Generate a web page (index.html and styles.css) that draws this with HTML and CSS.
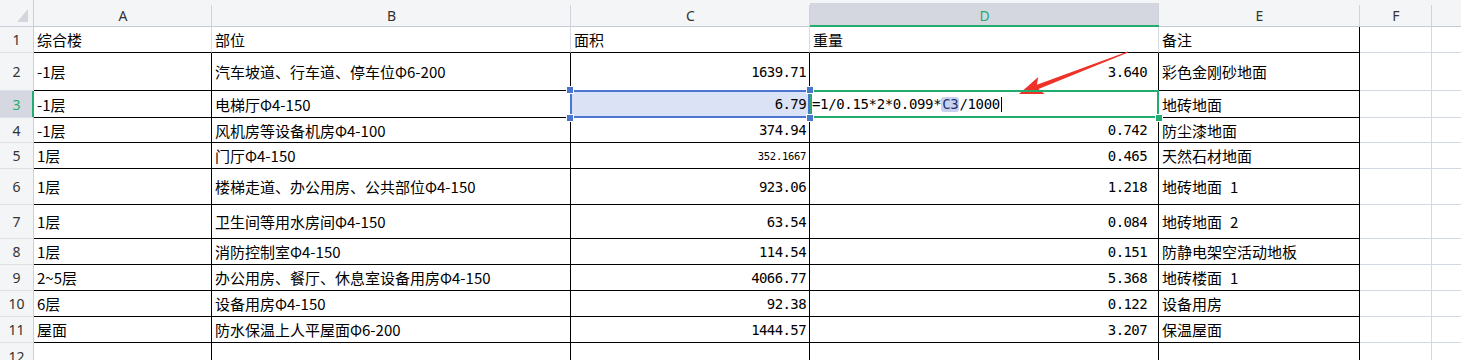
FILE: index.html
```html
<!DOCTYPE html>
<html lang="zh-CN">
<head>
<meta charset="utf-8">
<title>Sheet</title>
<link rel="stylesheet" href="styles.css">
</head>
<body>
<div class="sheet">
  <div class="grid">
    <div class="corner"><svg width="34" height="27" viewBox="0 0 34 27"><polygon points="17,22 28,22 28,9" fill="#d3d6dd"/></svg></div>
    <div class="ch">A</div>
    <div class="ch">B</div>
    <div class="ch">C</div>
    <div class="ch sel">D</div>
    <div class="ch">E</div>
    <div class="ch">F</div>
    <div class="ch"></div>

    <div class="rh">1</div>
    <div class="c r1">综合楼</div>
    <div class="c r1">部位</div>
    <div class="c r1">面积</div>
    <div class="c r1">重量</div>
    <div class="c r1 last">备注</div>
    <div class="g"></div><div class="g"></div>

    <div class="rh">2</div>
    <div class="c">-1层</div>
    <div class="c">汽车坡道、行车道、停车位Φ6-200</div>
    <div class="c n">1639.71</div>
    <div class="c n nd">3.640</div>
    <div class="c">彩色金刚砂地面</div>
    <div class="g"></div><div class="g"></div>

    <div class="rh sel">3</div>
    <div class="c">-1层</div>
    <div class="c">电梯厅Φ4-150</div>
    <div class="c n act-c">6.79<div class="sel-c"><span class="hd tl"></span><span class="hd tr"></span><span class="hd bl"></span><span class="hd br"></span></div></div>
    <div class="c fx act-d"><span>=1/0.15*2*0.099*</span><span class="ref">C3</span><span>/1000</span><span class="caret"></span><div class="sel-d"><span class="hd-g"></span></div></div>
    <div class="c">地砖地面</div>
    <div class="g"></div><div class="g"></div>

    <div class="rh">4</div>
    <div class="c">-1层</div>
    <div class="c">风机房等设备机房Φ4-100</div>
    <div class="c n">374.94</div>
    <div class="c n nd">0.742</div>
    <div class="c">防尘漆地面</div>
    <div class="g"></div><div class="g"></div>

    <div class="rh">5</div>
    <div class="c">1层</div>
    <div class="c">门厅Φ4-150</div>
    <div class="c n tiny">352.1667</div>
    <div class="c n nd">0.465</div>
    <div class="c">天然石材地面</div>
    <div class="g"></div><div class="g"></div>

    <div class="rh">6</div>
    <div class="c">1层</div>
    <div class="c">楼梯走道、办公用房、公共部位Φ4-150</div>
    <div class="c n">923.06</div>
    <div class="c n nd">1.218</div>
    <div class="c">地砖地面<span class="sp"></span>1</div>
    <div class="g"></div><div class="g"></div>

    <div class="rh">7</div>
    <div class="c">1层</div>
    <div class="c">卫生间等用水房间Φ4-150</div>
    <div class="c n">63.54</div>
    <div class="c n nd">0.084</div>
    <div class="c">地砖地面<span class="sp"></span>2</div>
    <div class="g"></div><div class="g"></div>

    <div class="rh">8</div>
    <div class="c">1层</div>
    <div class="c">消防控制室Φ4-150</div>
    <div class="c n">114.54</div>
    <div class="c n nd">0.151</div>
    <div class="c">防静电架空活动地板</div>
    <div class="g"></div><div class="g"></div>

    <div class="rh">9</div>
    <div class="c">2~5层</div>
    <div class="c">办公用房、餐厅、休息室设备用房Φ4-150</div>
    <div class="c n">4066.77</div>
    <div class="c n nd">5.368</div>
    <div class="c">地砖楼面<span class="sp"></span>1</div>
    <div class="g"></div><div class="g"></div>

    <div class="rh">10</div>
    <div class="c">6层</div>
    <div class="c">设备用房Φ4-150</div>
    <div class="c n">92.38</div>
    <div class="c n nd">0.122</div>
    <div class="c">设备用房</div>
    <div class="g"></div><div class="g"></div>

    <div class="rh">11</div>
    <div class="c">屋面</div>
    <div class="c">防水保温上人平屋面Φ6-200</div>
    <div class="c n">1444.57</div>
    <div class="c n nd">3.207</div>
    <div class="c">保温屋面</div>
    <div class="g"></div><div class="g"></div>

    <div class="rh last-row">12</div>
    <div class="c"></div>
    <div class="c"></div>
    <div class="c"></div>
    <div class="c"></div>
    <div class="c"></div>
    <div class="g"></div><div class="g"></div>
  </div>
  <svg class="arrow" width="1461" height="360" viewBox="0 0 1461 360">
    <polygon points="1019,94 1044.6,93.9 1038.5,89 1128.2,52.6 1127.8,51.4 1036.9,84.8 1038.2,77.1" fill="#ef3128"/>
  </svg>
</div>
</body>
</html>
```
FILE: styles.css
```css
html, body {
  margin: 0;
  padding: 0;
  background: #fff;
}

.sheet {
  position: relative;
  width: 1461px;
  height: 360px;
  overflow: hidden;
}

.grid {
  display: grid;
  grid-template-columns: 34px 178px 359px 239px 349px 201px 72px 72px;
  grid-template-rows: 27px 26px 38px 27px 25px 26px 36px 34px 26px 26px 26px 26px 30px;
  font-family: "Noto Sans CJK SC", sans-serif;
  font-size: 15px;
  color: #000;
}

.corner {
  background: #f4f5f7;
  border-right: 1px solid #c9ceda;
  border-bottom: 1px solid #c9ceda;
  box-sizing: border-box;
}

.corner svg {
  display: block;
}

.ch {
  box-sizing: border-box;
  background: linear-gradient(#cfd3dc, #cfd3dc) right bottom / 1px 21px no-repeat, #f4f5f7;
  border-bottom: 1px solid #c5cad6;
  display: flex;
  align-items: center;
  justify-content: center;
  padding-top: 5px;
  font-family: "Noto Sans", sans-serif;
  font-size: 14px;
  color: #333;
}

.ch.sel {
  background: linear-gradient(#cfd3dc, #cfd3dc) right bottom / 1px 21px no-repeat,
              linear-gradient(#d4d7df, #d4d7df) left bottom / 100% 22px no-repeat,
              #f4f5f7;
  border-bottom: 2px solid #22ac6f;
  color: #22ac6f;
}

.rh {
  box-sizing: border-box;
  background: #f4f5f7;
  border-right: 1px solid #c9ceda;
  border-bottom: 1px solid #dde0e7;
  display: flex;
  align-items: center;
  justify-content: center;
  font-family: "Noto Sans", sans-serif;
  font-size: 14px;
  color: #333;
}

.rh.last-row {
  align-items: flex-start;
  padding-top: 4px;
}

.rh.sel {
  background: #d5d8e0;
  color: #22ac6f;
  border-right-color: #22ac6f;
  box-shadow: inset -1px 0 0 #22ac6f;
}

.c {
  box-sizing: border-box;
  border-right: 1px solid #000;
  border-bottom: 1px solid #000;
  display: flex;
  align-items: center;
  padding: 0 3px;
  white-space: nowrap;
  overflow: hidden;
  position: relative;
}

.sp {
  display: inline-block;
  width: 8px;
}

.c.r1 {
  border-right-color: #d6dae3;
}

.c.r1.last {
  border-right-color: #000;
}

.c.n {
  justify-content: flex-end;
  font-family: "DejaVu Sans Mono", monospace;
  font-size: 14px;
  letter-spacing: -0.6px;
}

.c.nd {
  padding-right: 11px;
}

.c.tiny {
  font-size: 10.5px;
  letter-spacing: -0.3px;
}

.g {
  box-sizing: border-box;
  border-right: 1px solid #d3d8e5;
  border-bottom: 1px solid #d3d8e5;
}

.act-c {
  background: #dce2f5;
  overflow: visible;
  z-index: 3;
}

.act-d {
  overflow: visible;
  z-index: 2;
}

.fx {
  padding-left: 2px;
  font-family: "DejaVu Sans Mono", monospace;
  font-size: 14px;
  letter-spacing: -0.35px;
}

.ref {
  display: inline-block;
  background: #c8d2ef;
  border-radius: 3px;
  line-height: 15px;
  padding: 0 1px;
  color: #1d3670;
}

.caret {
  display: inline-block;
  width: 1px;
  height: 15px;
  background: #000;
  margin-left: 1px;
}

.sel-c {
  position: absolute;
  top: -1px;
  left: -1px;
  right: -1px;
  bottom: -1px;
  border: 2px solid #4a76d2;
}

.hd {
  position: absolute;
  width: 6px;
  height: 6px;
  background: #4a76d2;
  box-shadow: 0 0 0 1px #fff;
}

.hd.tl { left: -5px; top: -5px; }
.hd.tr { right: -5px; top: -5px; }
.hd.bl { left: -5px; bottom: -5px; }
.hd.br { right: -5px; bottom: -5px; }

.sel-d {
  position: absolute;
  top: -1px;
  left: 0;
  right: -1px;
  bottom: -1px;
  border: 2px solid #22ac6f;
}

.hd-g {
  position: absolute;
  right: -5px;
  bottom: -5px;
  width: 6px;
  height: 6px;
  background: #22ac6f;
  box-shadow: 0 0 0 1px #fff;
}

.arrow {
  position: absolute;
  left: 0;
  top: 0;
  pointer-events: none;
}
```
